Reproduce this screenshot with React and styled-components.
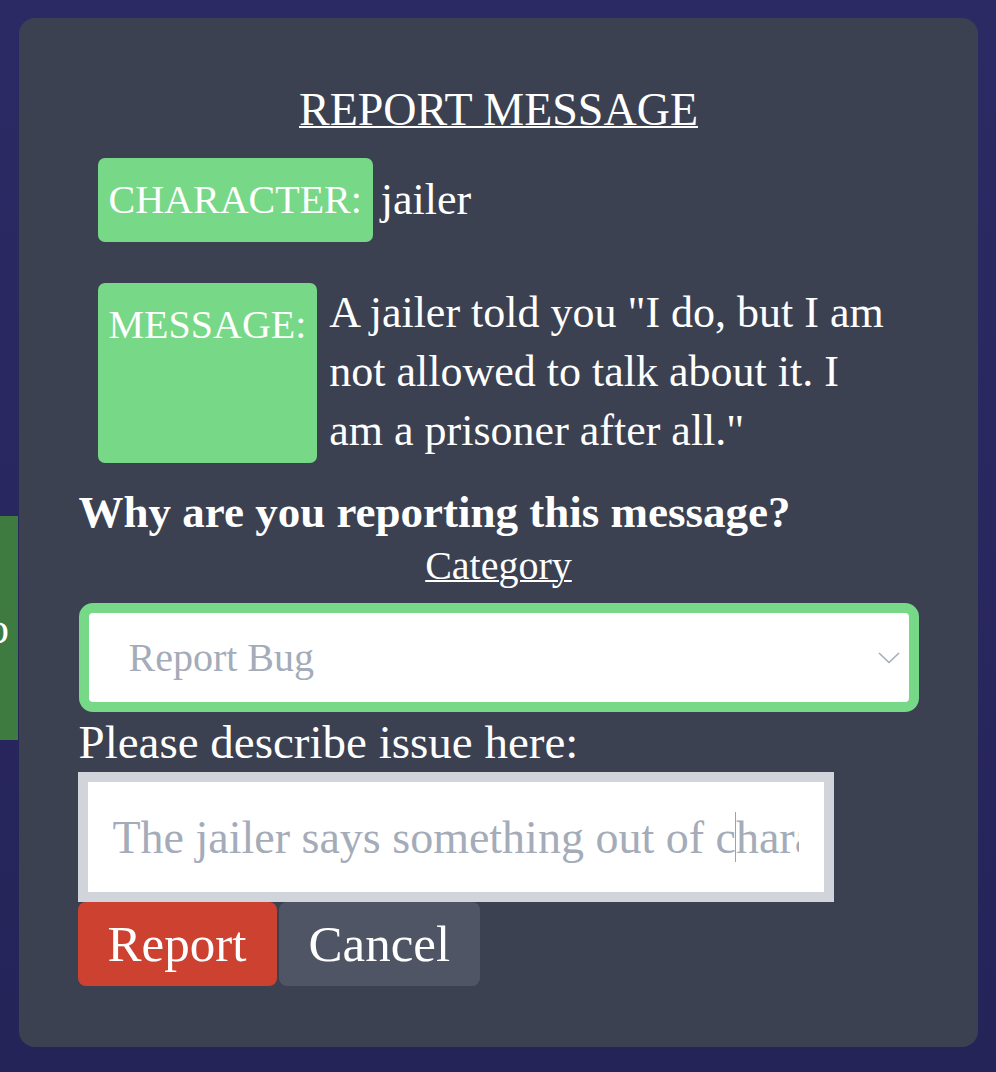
import React from "react";
import styled, { createGlobalStyle } from "styled-components";

const Global = createGlobalStyle`
  html, body { margin: 0; padding: 0; }
  body {
    font-family: "Liberation Serif", "Times New Roman", serif;
    background: linear-gradient(180deg, #2c2a64 0%, #252459 100%);
    min-height: 100vh;
  }
`;

const Page = styled.div`
  position: relative;
  min-height: 100vh;
  padding-top: 516px;
  box-sizing: border-box;
  overflow: hidden;
`;

const SideButton = styled.div`
  width: 200px;
  height: 224px;
  margin-left: -182px;
  background: #3d7b41;
  color: #ffffff;
  font-size: 44px;
  display: flex;
  align-items: center;
  justify-content: flex-end;
  padding-right: 9px;
  box-sizing: border-box;
`;

const Overlay = styled.div`
  position: fixed;
  inset: 0;
  display: flex;
  justify-content: center;
  align-items: flex-start;
  padding-top: 18px;
`;

const Modal = styled.div`
  width: 959px;
  box-sizing: border-box;
  background: #3b4151;
  border-radius: 16px;
  padding: 66px 59px 61px 60px;
  color: #ffffff;
  display: flex;
  flex-direction: column;
`;

const Title = styled.h2`
  margin: 0;
  font-weight: 400;
  font-size: 46px;
  line-height: 52px;
  text-align: center;
  text-decoration: underline;
  text-decoration-thickness: 2px;
`;

const InfoRow = styled.div`
  display: flex;
  align-items: ${(p) => (p.$top ? "stretch" : "center")};
  margin: ${(p) => p.$mt}px 0 0 19px;
`;

const Tag = styled.div`
  background: #77d887;
  border-radius: 7px;
  padding: 12px 11px;
  font-size: 40px;
  line-height: 60px;
  white-space: nowrap;
  color: #ffffff;
  box-sizing: border-box;
`;

const Value = styled.div`
  font-size: 44px;
  line-height: ${(p) => (p.$multi ? "59px" : "60px")};
  margin-left: ${(p) => (p.$multi ? 12 : 8)}px;
  max-width: 566px;
  padding-bottom: ${(p) => (p.$multi ? 3 : 0)}px;
`;

const Question = styled.div`
  margin-top: 23px;
  font-size: 45px;
  font-weight: 700;
  line-height: 52px;
`;

const SubHeading = styled.div`
  margin-top: 4px;
  font-size: 40px;
  line-height: 48px;
  text-align: center;
  text-decoration: underline;
  text-decoration-thickness: 2px;
`;

const SelectWrap = styled.div`
  position: relative;
  margin-top: 13px;
`;

const Select = styled.select`
  appearance: none;
  -webkit-appearance: none;
  width: 100%;
  height: 109px;
  box-sizing: border-box;
  border: 10px solid #77d887;
  border-radius: 14px;
  background: #ffffff;
  color: #a4abb9;
  font-family: "Liberation Serif", "Times New Roman", serif;
  font-size: 40px;
  padding: 0 0 0 40px;
  outline: none;
`;

const Chevron = styled.svg`
  position: absolute;
  right: 19px;
  top: 49px;
  pointer-events: none;
`;

const FieldLabel = styled.label`
  font-size: 47px;
  line-height: 60px;
`;

const InputWrap = styled.div`
  position: relative;
  width: 756px;
  margin-left: -1px;
`;

const TextInput = styled.input`
  width: 100%;
  height: 130px;
  box-sizing: border-box;
  border: 10px solid #d1d5db;
  border-radius: 0;
  background: #ffffff;
  padding: 0 25px;
  font-family: "Liberation Serif", "Times New Roman", serif;
  font-size: 46px;
  color: #374151;
  outline: none;
  &::placeholder {
    color: #a4abb9;
  }
`;

const IBeam = styled.span`
  position: absolute;
  left: 657px;
  top: 40px;
  width: 1.5px;
  height: 50px;
  background: #9ca3af;
  pointer-events: none;
`;

const Actions = styled.div`
  display: flex;
  gap: 2px;
  margin-left: -1px;
`;

const Button = styled.button`
  height: 84px;
  min-width: 199px;
  padding: 0 30px;
  border: none;
  border-radius: 8px;
  background: ${(p) => (p.$danger ? "#cc4130" : "#4f5564")};
  color: #ffffff;
  font-family: "Liberation Serif", "Times New Roman", serif;
  font-size: 51px;
  cursor: pointer;
`;

export default function App() {
  return (
    <>
      <Global />
      <Page>
        <SideButton>o</SideButton>
      </Page>
      <Overlay>
        <Modal>
          <Title>REPORT MESSAGE</Title>
          <InfoRow $mt={22}>
            <Tag>CHARACTER:</Tag>
            <Value>jailer</Value>
          </InfoRow>
          <InfoRow $mt={41} $top>
            <Tag>MESSAGE:</Tag>
            <Value $multi>
              A jailer told you "I do, but I am not allowed to talk about it. I
              am a prisoner after all."
            </Value>
          </InfoRow>
          <Question>Why are you reporting this message?</Question>
          <SubHeading>Category</SubHeading>
          <SelectWrap>
            <Select defaultValue="bug">
              <option value="bug">Report Bug</option>
              <option value="abuse">Report Abuse</option>
              <option value="other">Other</option>
            </Select>
            <Chevron width="22" height="12" viewBox="0 0 22 12" fill="none">
              <polyline
                points="1,1 11,10.5 21,1"
                stroke="#a4abb9"
                strokeWidth="1.6"
                fill="none"
              />
            </Chevron>
          </SelectWrap>
          <FieldLabel htmlFor="issue">Please describe issue here:</FieldLabel>
          <InputWrap>
            <TextInput
              id="issue"
              type="text"
              placeholder="The jailer says something out of character"
            />
            <IBeam />
          </InputWrap>
          <Actions>
            <Button $danger>Report</Button>
            <Button>Cancel</Button>
          </Actions>
        </Modal>
      </Overlay>
    </>
  );
}
